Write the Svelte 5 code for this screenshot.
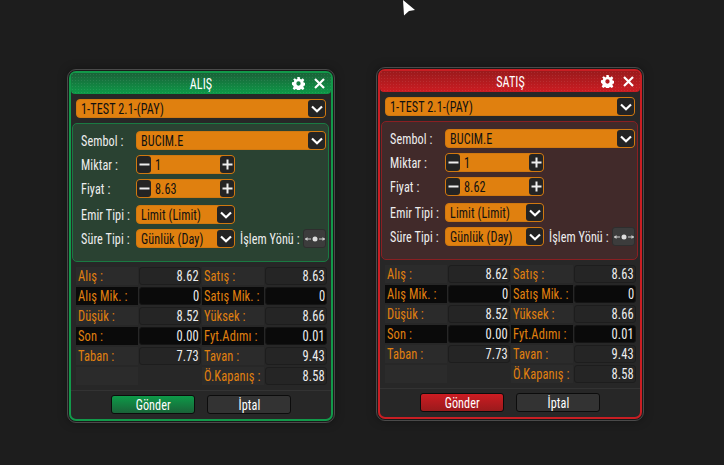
<script>
  const windows = [
    { cls: 'buy', title: 'ALIŞ', price: '8.63', pos: 'pos-buy' },
    { cls: 'sell', title: 'SATIŞ', price: '8.62', pos: 'pos-sell' }
  ];
  const stats = [
    ['Alış :', '8.62', 'Satış :', '8.63', ''],
    ['Alış Mik. :', '0', 'Satış Mik. :', '0', 'dark'],
    ['Düşük :', '8.52', 'Yüksek :', '8.66', ''],
    ['Son :', '0.00', 'Fyt.Adımı :', '0.01', 'dark'],
    ['Taban :', '7.73', 'Tavan :', '9.43', ''],
    ['', '', 'Ö.Kapanış :', '8.58', 'last']
  ];
</script>

{#snippet chevron()}
  <span class="btn-dark arrow">
    <svg width="12" height="8" viewBox="0 0 12 8"><path d="M1 1.500 6 6.200l5-4.700" fill="none" stroke="#fff" stroke-width="2.200"/></svg>
  </span>
{/snippet}

{#snippet stepper(value)}
  <div class="stepper">
    <span class="btn-dark step"><svg width="11" height="11" viewBox="0 0 11 11"><path d="M0.5 5.500h10" stroke="#eee" stroke-width="2"/></svg></span>
    <span class="step-val"><span class="txt">{value}</span></span>
    <span class="btn-dark step"><svg width="11" height="11" viewBox="0 0 11 11"><path d="M0.5 5.500h10M5.500 0.500v10" stroke="#eee" stroke-width="2"/></svg></span>
  </div>
{/snippet}

<main class="desktop">
  <svg class="cursor" width="14" height="16" viewBox="0 0 14 16"><path d="M1 0 13 10 7 11 2 15.500z" fill="#fff"/></svg>

  {#each windows as w}
    <section class="win {w.cls} {w.pos}">
      <div class="frame">
        <header class="head">
          <span class="title"><span class="txt mid">{w.title}</span></span>
          <svg class="gear" width="13" height="13" viewBox="0 0 12 12">
            <path d="M4.900 0h2.200l.3 1.700 1.100.5L9.900 1.200l1.500 1.500-1 1.400.5 1.100 1.600.3v2.200l-1.600.3-.5 1.100 1 1.400-1.500 1.500-1.400-1-1.100.5-.3 1.600H4.900l-.3-1.600-1.100-.5-1.400 1-1.500-1.500 1-1.400-.5-1.100L0 7.100V4.900l1.600-.3.5-1.100-1-1.400L2.600 1.200 4 2.200l1-.5zM6 4a2 2 0 1 0 0 4 2 2 0 0 0 0-4z" fill="#fff" fill-rule="evenodd"/>
          </svg>
          <svg class="close" width="11" height="11" viewBox="0 0 11 11"><path d="M1 1l9 9M10 1l-9 9" stroke="#fff" stroke-width="2.200"/></svg>
        </header>

        <div class="select account">
          <span class="txt">1-TEST 2.1-(PAY)</span>
          {@render chevron()}
        </div>

        <div class="form">
          <div class="row">
            <span class="lbl"><span class="txt">Sembol :</span></span>
            <div class="select grow"><span class="txt">BUCIM.E</span>{@render chevron()}</div>
          </div>
          <div class="row">
            <span class="lbl"><span class="txt">Miktar :</span></span>
            {@render stepper('1')}
          </div>
          <div class="row">
            <span class="lbl"><span class="txt">Fiyat :</span></span>
            {@render stepper(w.price)}
          </div>
          <div class="row wide-gap">
            <span class="lbl"><span class="txt">Emir Tipi :</span></span>
            <div class="select short"><span class="txt">Limit (Limit)</span>{@render chevron()}</div>
          </div>
          <div class="row">
            <span class="lbl"><span class="txt">Süre Tipi :</span></span>
            <div class="select short"><span class="txt">Günlük (Day)</span>{@render chevron()}</div>
            <span class="dir-lbl"><span class="txt">İşlem Yönü :</span></span>
            <span class="dir">
              <svg width="22" height="8" viewBox="0 0 22 8">
                <path d="M1 4h6M15 4h6" stroke="#ccc" stroke-width="1"/>
                <path d="M1 4l2.500-2v4zM21 4l-2.500-2v4z" fill="#ccc"/>
                <circle cx="11" cy="4" r="2.500" fill="#ddd"/>
              </svg>
            </span>
          </div>
        </div>

        <div class="stats">
          {#each stats as s}
            <div class="cell label {s[4]}"><span class="txt">{s[0]}</span></div>
            {#if s[1]}
              <div class="cell value {s[4]}"><span class="txt end">{s[1]}</span></div>
            {:else}
              <div></div>
            {/if}
            <div class="cell label {s[4]}"><span class="txt">{s[2]}</span></div>
            <div class="cell value {s[4]}"><span class="txt end">{s[3]}</span></div>
          {/each}
        </div>

        <footer class="foot">
          <button class="send"><span class="txt mid">Gönder</span></button>
          <button class="cancel"><span class="txt mid">İptal</span></button>
        </footer>
      </div>
    </section>
  {/each}
</main>

<style>
  :global(body) { margin: 0; background: #1d1d1d; }
  .desktop { position: relative; width: 724px; height: 465px; overflow: hidden; background: #1d1d1d; font-family: Roboto, "Liberation Sans", sans-serif; font-stretch: 75%; }
  .txt { display: inline-block; white-space: nowrap; letter-spacing: 0.1px; transform: scaleX(.87); transform-origin: left center; }
  .txt.mid { transform-origin: center center; }
  .txt.end { transform-origin: right center; }
  .stats .txt { transform: scaleX(.86); }
  .row > .lbl .txt, .dir-lbl .txt, .row .select .txt, .step-val .txt { padding-top: 1px; }
  .cursor { position: absolute; left: 402px; top: 0; }

  .win { position: absolute; width: 268px; height: 354px; box-sizing: border-box; border: 1px solid #4a4a4a; border-radius: 9px; padding: 1px; background: #1a1a1a; box-shadow: 0 0 10px rgba(0,0,0,.35); }
  .pos-buy { left: 67px; top: 69px; }
  .pos-sell { left: 376px; top: 67px; }
  .frame { height: 100%; box-sizing: border-box; border: 2px solid var(--accent); border-radius: 7px; background: #272727; display: flex; flex-direction: column; align-items: stretch; }
  .buy { --accent: #12994a; --h1: #1a6238; --h2: #0d9a48; --panel: #2a4232; --panel-b: #1a7a42; }
  .sell { --accent: #c81e23; --h1: #9a1a1c; --h2: #cc1c22; --panel: #412a2a; --panel-b: #8a1f22; }

  .head { position: relative; height: 21px; background: radial-gradient(rgba(255,255,255,.08) 0.5px, transparent 0.7px) 0 0 / 3px 3px, linear-gradient(var(--h1), var(--h2)); border-radius: 4px; display: flex; align-items: center; justify-content: flex-end; color: #fff; font-size: 14px; flex: none; }
  .title { position: absolute; left: 0; right: 0; text-align: center; }
  .gear { position: relative; margin-right: 9px; }
  .close { position: relative; margin-right: 6px; }

  .select { display: flex; align-items: center; justify-content: space-between; height: 19px; box-sizing: border-box; background: #e0800f; border-radius: 4px; color: #111; font-size: 14px; padding-left: 4px; border: 1px solid #d07810; flex: none; }
  .account { margin: 5px; }
  .grow { width: 190px; }
  .short { width: 99px; }
  .btn-dark { display: flex; align-items: center; justify-content: center; background: #242424; border-radius: 3px; height: 100%; }
  .arrow { width: 17px; }

  .form { flex: none; box-sizing: border-box; height: 139px; margin: 0 2px 0 1px; border: 1px solid var(--panel-b); border-radius: 5px; background: var(--panel); padding: 7px 0 0 8px; display: flex; flex-direction: column; gap: 5px; }
  .row { display: flex; align-items: center; height: 19px; color: #eee; font-size: 14px; }
  .wide-gap { margin-top: 2px; }
  .lbl { width: 55px; flex: none; }
  .stepper { display: flex; align-items: center; width: 99px; height: 19px; box-sizing: border-box; border: 1px solid #d07810; background: #e0800f; border-radius: 4px; color: #111; }
  .step { width: 14px; flex: none; }
  .step-val { flex: 1; padding-left: 4px; }
  .dir-lbl { margin-left: 5px; width: 63px; flex: none; }
  .dir { width: 23px; height: 19px; box-sizing: border-box; border: 1px solid #2e2e2e; background: #3c3c3c; border-radius: 3px; display: flex; align-items: center; justify-content: center; }
  .dir svg { flex: none; }

  .stats { flex: none; margin: 5px 0 0 5px; display: grid; grid-template-columns: repeat(4, 62px); grid-auto-rows: 18px; gap: 2px 1px; font-size: 14.500px; }
  .cell { display: flex; align-items: center; box-sizing: border-box; }
  .label { background: #2b2b2b radial-gradient(#3a3a3a 0.5px, transparent 0.6px) 0 0 / 4px 4px; color: #e0800f; padding-left: 2px; }
  .value { justify-content: flex-end; background: #252525; border: 1px solid #1d1d1d; border-radius: 3px; color: #eee; padding-right: 1px; }
  .label.dark { background: #0a0a0a; }
  .value.dark { background: #0a0a0a; border-color: #141414; }

  .foot { flex: none; margin-top: 5px; border-top: 1px solid #333; height: 29px; padding: 4px 0 0 40px; box-sizing: border-box; display: flex; gap: 12px; }
  .foot button { width: 84px; height: 19px; padding: 0; border: 1px solid #0c0c0c; border-radius: 3px; font-family: inherit; font-stretch: inherit; font-size: 14px; color: #fff; }
  .send { background: linear-gradient(var(--h2), var(--h1)); }
  .cancel { background: #333; }
</style>
